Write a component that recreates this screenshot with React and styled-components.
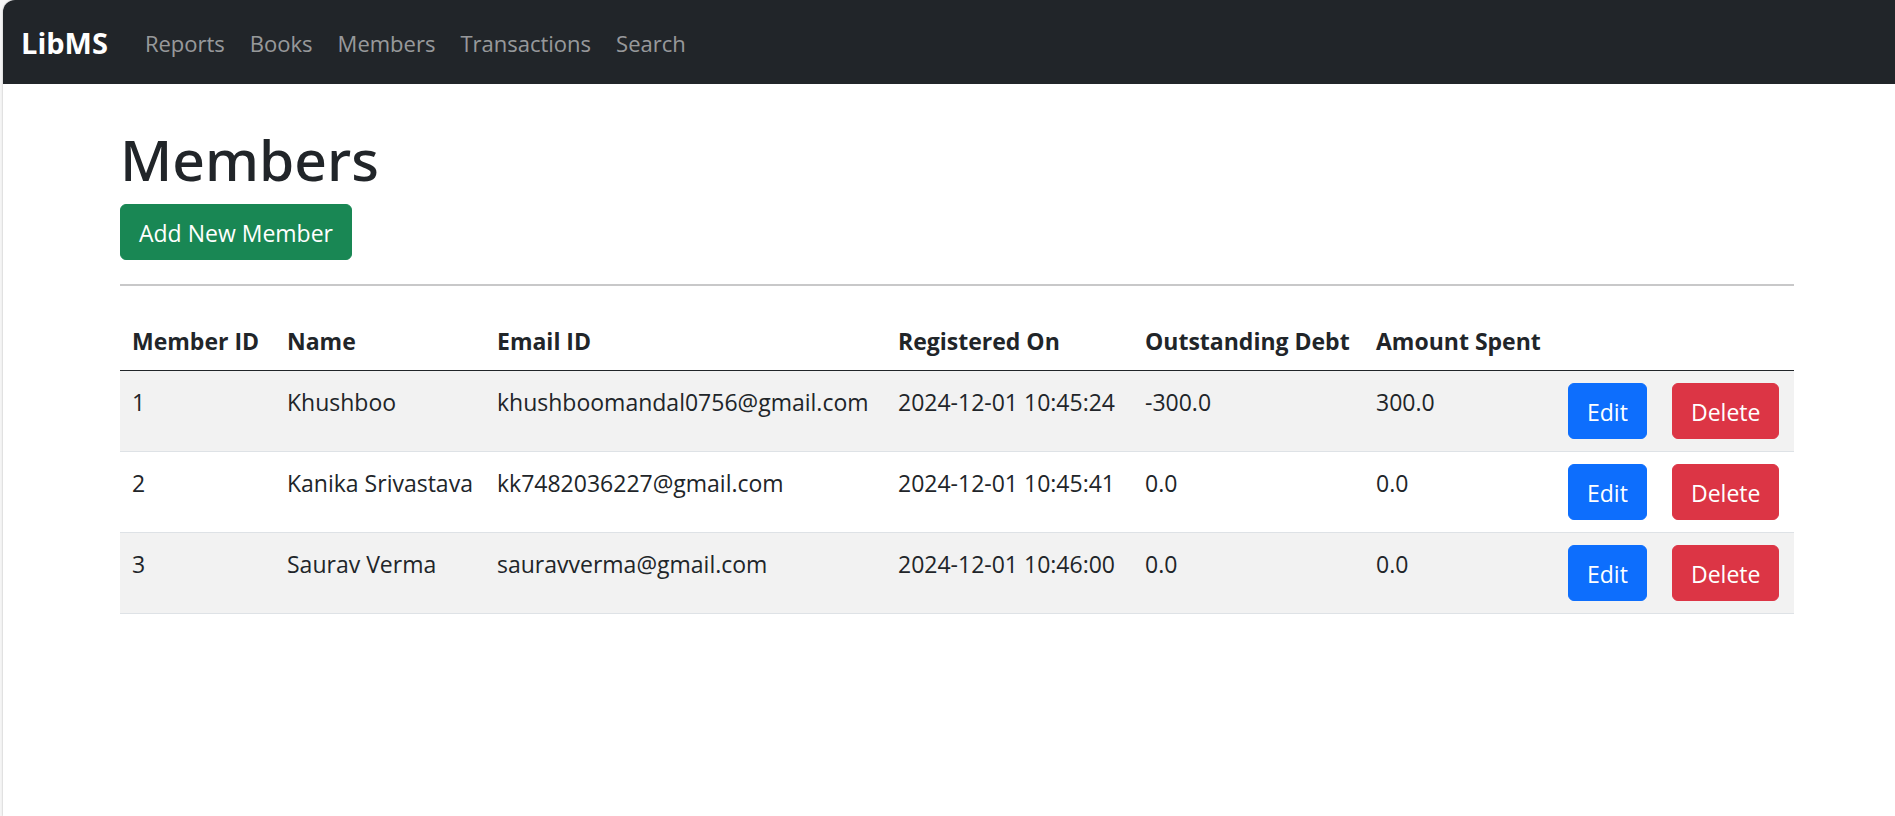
import React from "react";
import styled, { createGlobalStyle } from "styled-components";

const GlobalStyle = createGlobalStyle`
  *, *::before, *::after { box-sizing: border-box; }
  body {
    margin: 0;
    background: #f5f5f5;
    color: #212529;
    font-family: "Segoe UI", "Open Sans", "Noto Sans", sans-serif;
    font-size: 23px;
    line-height: 36px;
  }
`;

const Page = styled.div`
  min-height: 100vh;
  margin-left: 3px;
  background: #fff;
  border-top-left-radius: 12px;
  box-shadow: 0 0 2px rgba(0, 0, 0, 0.3);
  overflow: hidden;
`;

const Navbar = styled.nav`
  display: flex;
  align-items: center;
  gap: 25px;
  padding: 13px 18px 11px;
  background: #212529;
`;

const Brand = styled.a`
  color: #fff;
  font-size: 29px;
  font-weight: 700;
  text-decoration: none;
`;

const NavList = styled.ul`
  display: flex;
  gap: 1px;
  margin: 0;
  padding: 0;
  list-style: none;
`;

const NavLink = styled.a`
  display: block;
  padding: 12px;
  color: rgba(255, 255, 255, 0.55);
  font-size: 22px;
  text-decoration: none;
`;

const Main = styled.main`
  padding: 39px 101px 36px 117px;
`;

const Title = styled.h1`
  margin: 0 0 9px;
  font-family: "Segoe UI", "Noto Sans", "Open Sans", sans-serif;
  font-size: 57px;
  font-weight: 500;
  line-height: 72px;
`;

const tones = { success: "#198754", primary: "#0d6efd", danger: "#dc3545" };

const Button = styled.button`
  display: block;
  padding: 10px 18px 8px;
  border: 1px solid ${({ $tone }) => tones[$tone]};
  border-radius: 6px;
  background: ${({ $tone }) => tones[$tone]};
  color: #fff;
  font: inherit;
  white-space: nowrap;
  cursor: pointer;
`;

const Divider = styled.hr`
  height: 2px;
  margin: 24px 0;
  border: 0;
  background: #c8c8c9;
`;

const Table = styled.table`
  width: 100%;
  table-layout: fixed;
  border-collapse: separate;
  border-spacing: 0;
`;

const Column = styled.col`
  width: ${({ $width }) => $width}px;
`;

const HeadCell = styled.th`
  padding: 13px 12px 11px;
  border-bottom: 1px solid #212529;
  font-weight: 700;
  text-align: left;
  white-space: nowrap;
`;

const Row = styled.tr`
  &:nth-child(odd) { background: #f2f2f2; }
`;

const Cell = styled.td`
  padding: 13px 12px 11px;
  border-bottom: 1px solid #dee2e6;
  vertical-align: top;
  white-space: nowrap;
`;

const ActionCell = styled(Cell)`
  padding: 12px;
`;

const links = ["Reports", "Books", "Members", "Transactions", "Search"];

const columns = [
  { label: "Member ID", width: 155 },
  { label: "Name", width: 210 },
  { label: "Email ID", width: 401 },
  { label: "Registered On", width: 247 },
  { label: "Outstanding Debt", width: 231 },
  { label: "Amount Spent", width: 192 },
  { label: "", width: 104 },
  { label: "", width: 134 },
];

const members = [
  { id: 1, name: "Khushboo", email: "khushboomandal0756@gmail.com", registered: "2024-12-01 10:45:24", debt: "-300.0", spent: "300.0" },
  { id: 2, name: "Kanika Srivastava", email: "kk7482036227@gmail.com", registered: "2024-12-01 10:45:41", debt: "0.0", spent: "0.0" },
  { id: 3, name: "Saurav Verma", email: "sauravverma@gmail.com", registered: "2024-12-01 10:46:00", debt: "0.0", spent: "0.0" },
];

export default function App() {
  return (
    <>
      <GlobalStyle />
      <Page>
        <Navbar>
          <Brand href="#">LibMS</Brand>
          <NavList>
            {links.map((link) => (
              <li key={link}>
                <NavLink href={`#${link.toLowerCase()}`}>{link}</NavLink>
              </li>
            ))}
          </NavList>
        </Navbar>
        <Main>
          <Title>Members</Title>
          <Button type="button" $tone="success">Add New Member</Button>
          <Divider />
          <Table>
            <colgroup>
              {columns.map((column, i) => (
                <Column key={i} $width={column.width} />
              ))}
            </colgroup>
            <thead>
              <tr>
                {columns.map((column, i) => (
                  <HeadCell key={i} scope="col">{column.label}</HeadCell>
                ))}
              </tr>
            </thead>
            <tbody>
              {members.map((member) => (
                <Row key={member.id}>
                  <Cell>{member.id}</Cell>
                  <Cell>{member.name}</Cell>
                  <Cell>{member.email}</Cell>
                  <Cell>{member.registered}</Cell>
                  <Cell>{member.debt}</Cell>
                  <Cell>{member.spent}</Cell>
                  <ActionCell><Button type="button" $tone="primary">Edit</Button></ActionCell>
                  <ActionCell><Button type="button" $tone="danger">Delete</Button></ActionCell>
                </Row>
              ))}
            </tbody>
          </Table>
        </Main>
      </Page>
    </>
  );
}
